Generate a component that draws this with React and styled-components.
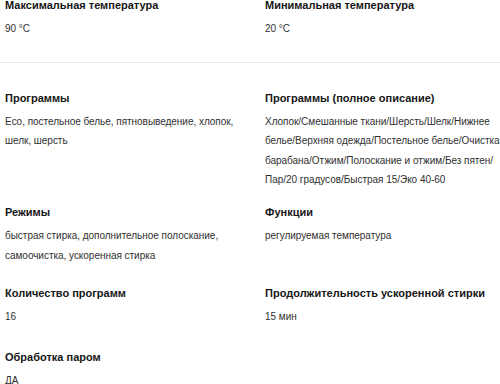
import React from "react";
import styled, { createGlobalStyle } from "styled-components";

const Global = createGlobalStyle`
  html, body { margin: 0; padding: 0; background: #fff; }
  body { font-family: "Liberation Sans", Arial, sans-serif; width: 500px; overflow: hidden; }
`;

const Page = styled.div`
  margin-top: -2px;
  display: flex;
  flex-direction: column;
`;

const Row = styled.div`
  display: grid;
  grid-template-columns: 235px 245px;
  column-gap: 25px;
  padding: 0 0 ${(p) => p.$after}px 5px;
`;

const Divider = styled.hr`
  margin: 0 0 28px;
  border: 0;
  height: 1px;
  background: #ebebeb;
`;

const Item = styled.div`
  display: flex;
  flex-direction: column;
`;

const Title = styled.div`
  font-size: 11px;
  line-height: 14px;
  font-weight: 700;
  color: #161616;
`;

const Value = styled.div`
  margin-top: 7px;
  font-size: 10px;
  line-height: 19.5px;
  letter-spacing: -0.03px;
  color: #303030;
  white-space: pre-line;
`;

const rows = [
  {
    after: 23,
    items: [
      ["Максимальная температура", "90 °C"],
      ["Минимальная температура", "20 °C"],
    ],
  },
  {
    after: 15.5,
    items: [
      ["Программы", "Eco, постельное белье, пятновыведение, хлопок, шелк, шерсть"],
      [
        "Программы (полное описание)",
        "Хлопок/Смешанные ткани/Шерсть/Шелк/Нижнее\nбелье/Верхняя одежда/Постельное белье/Очистка\nбарабана/Отжим/Полоскание и отжим/Без пятен/\nПар/20 градусов/Быстрая 15/Эко 40-60",
      ],
    ],
  },
  {
    after: 20.5,
    items: [
      ["Режимы", "быстрая стирка, дополнительное полоскание, самоочистка, ускоренная стирка"],
      ["Функции", "регулируемая температура"],
    ],
  },
  {
    after: 24,
    items: [
      ["Количество программ", "16"],
      ["Продолжительность ускоренной стирки", "15 мин"],
    ],
  },
  {
    after: 0,
    items: [["Обработка паром", "ДА"]],
  },
];

export default function App() {
  return (
    <>
      <Global />
      <Page>
        {rows.map((row, i) => (
          <React.Fragment key={i}>
            <Row $after={row.after}>
              {row.items.map(([t, v]) => (
                <Item key={t}>
                  <Title>{t}</Title>
                  <Value>{v}</Value>
                </Item>
              ))}
            </Row>
            {i === 0 && <Divider />}
          </React.Fragment>
        ))}
      </Page>
    </>
  );
}
